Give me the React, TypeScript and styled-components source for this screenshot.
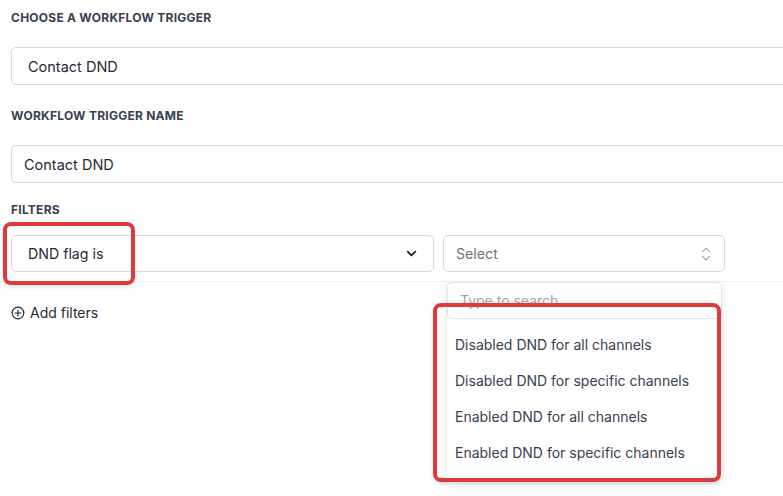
import React from "react";
import styled, { createGlobalStyle } from "styled-components";

const Global = createGlobalStyle`
  html, body { margin: 0; padding: 0; background: #ffffff; overflow: hidden; }
  body { font-family: Inter, "Noto Sans", "Liberation Sans", sans-serif; color: #1f2937; }
`;

const Page = styled.div`
  width: 900px;
  padding: 11px 0 0 11px;
  position: relative;
  height: 496px;
  box-sizing: border-box;
`;

const Section = styled.div<{ $gap?: number }>`
  display: flex;
  flex-direction: column;
  margin-bottom: ${(p) => p.$gap ?? 24}px;
`;

const Label = styled.div<{ $mb?: number }>`
  font-size: 12px;
  font-weight: 700;
  letter-spacing: 0.25px;
  color: #374151;
  text-transform: uppercase;
  line-height: 14px;
  margin-bottom: ${(p) => p.$mb ?? 22}px;
`;

const Input = styled.div<{ $pad?: number }>`
  height: 38px;
  box-sizing: border-box;
  border: 1px solid #d4d7dc;
  border-radius: 5px;
  display: flex;
  align-items: center;
  padding-left: ${(p) => p.$pad ?? 16}px;
  font-size: 14.5px;
  color: #1f2937;
`;

const FilterRow = styled.div`
  display: flex;
  gap: 9px;
  position: relative;
  padding-bottom: 9px;
  border-bottom: 1px solid #f1f2f4;
  margin-left: -11px;
  padding-left: 11px;
`;

const SelectBox = styled.div<{ $w: number; $placeholder?: boolean }>`
  width: ${(p) => p.$w}px;
  height: 37px;
  box-sizing: border-box;
  border: 1px solid #d4d7dc;
  border-radius: 5px;
  display: flex;
  align-items: center;
  justify-content: space-between;
  padding: 0 ${(p) => (p.$placeholder ? 11 : 14)}px 0 ${(p) => (p.$placeholder ? 12 : 16)}px;
  font-size: 14.2px;
  color: ${(p) => (p.$placeholder ? "#6b7280" : "#1f2937")};
  position: relative;
`;

const Dropdown = styled.div`
  position: absolute;
  top: 46px;
  left: 3px;
  width: 275px;
  background: #ffffff;
  box-shadow: 0 4px 12px rgba(0, 0, 0, 0.08), 0 1px 3px rgba(0, 0, 0, 0.05);
  border-radius: 0 0 6px 6px;
  z-index: 2;
  padding-bottom: 9px;
`;

const Search = styled.div`
  height: 37px;
  box-sizing: border-box;
  border: 1px solid #e3e5e8;
  border-radius: 4px;
  display: flex;
  align-items: center;
  padding-left: 12px;
  font-size: 14px;
  color: #9ca3af;
`;

const Options = styled.div`
  padding-top: 7px;
  display: flex;
  flex-direction: column;
`;

const Option = styled.div`
  height: 36px;
  display: flex;
  align-items: center;
  padding-left: 8px;
  font-size: 14px;
  color: #374151;
`;

const AddFilters = styled.div`
  display: flex;
  align-items: center;
  gap: 5px;
  margin-top: 22px;
  font-size: 14px;
  color: #1f2937;
`;

const Annotation = styled.div<{ $x: number; $y: number; $w: number; $h: number }>`
  position: absolute;
  left: ${(p) => p.$x}px;
  top: ${(p) => p.$y}px;
  width: ${(p) => p.$w}px;
  height: ${(p) => p.$h}px;
  box-sizing: border-box;
  border: 4.5px solid #dd3b3b;
  border-radius: 8px;
  box-shadow: 0 2px 4px rgba(0, 0, 0, 0.12);
  z-index: 5;
  pointer-events: none;
`;

const ChevronDown = () => (
  <svg width="15" height="15" viewBox="0 0 24 24" fill="none" stroke="#1f2937" strokeWidth="3" strokeLinecap="round" strokeLinejoin="round">
    <path d="M6 9l6 6 6-6" />
  </svg>
);

const ChevronsUpDown = () => (
  <svg width="14" height="18" viewBox="0 0 24 30" fill="none" stroke="#9ca3af" strokeWidth="2.2" strokeLinecap="round" strokeLinejoin="round">
    <path d="M6 11l6-6 6 6" />
    <path d="M6 19l6 6 6-6" />
  </svg>
);

const PlusCircle = () => (
  <svg width="14" height="14" viewBox="0 0 24 24" fill="none" stroke="#1f2937" strokeWidth="2" strokeLinecap="round">
    <circle cx="12" cy="12" r="10" />
    <path d="M12 7v10M7 12h10" />
  </svg>
);

const options = [
  "Disabled DND for all channels",
  "Disabled DND for specific channels",
  "Enabled DND for all channels",
  "Enabled DND for specific channels",
];

export default function App() {
  return (
    <>
      <Global />
      <Page>
        <Section>
          <Label>Choose a workflow trigger</Label>
          <Input>Contact DND</Input>
        </Section>
        <Section $gap={20}>
          <Label>Workflow trigger name</Label>
          <Input $pad={12}>Contact DND</Input>
        </Section>
        <Section $gap={0}>
          <Label $mb={18}>Filters</Label>
          <FilterRow>
            <SelectBox $w={423}>
              DND flag is
              <ChevronDown />
            </SelectBox>
            <SelectBox $w={282} $placeholder>
              Select
              <ChevronsUpDown />
              <Dropdown>
                <Search>Type to search</Search>
                <Options>
                  {options.map((o) => (
                    <Option key={o}>{o}</Option>
                  ))}
                </Options>
              </Dropdown>
            </SelectBox>
          </FilterRow>
          <AddFilters>
            <PlusCircle />
            Add filters
          </AddFilters>
        </Section>
        <Annotation $x={3} $y={222} $w={132} $h={63} />
        <Annotation $x={433} $y={303} $w={288} $h={179} />
      </Page>
    </>
  );
}
